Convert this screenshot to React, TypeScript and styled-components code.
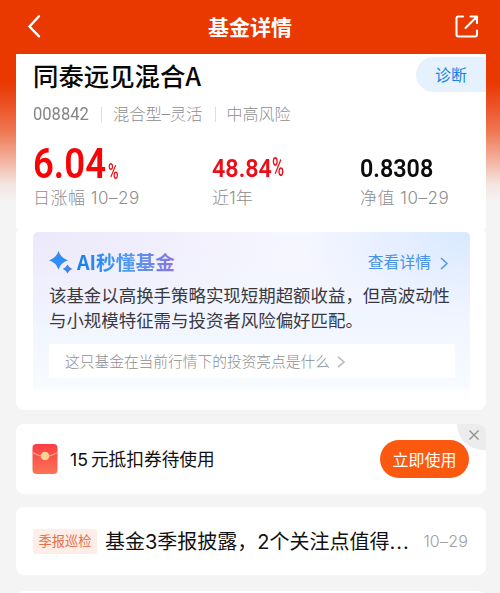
import React from 'react';
import styled, { createGlobalStyle } from 'styled-components';

const GlobalStyle = createGlobalStyle`
  * { box-sizing: border-box; }
  body {
    margin: 0;
    background: #f4f4f4;
    font-family: Inter, "Noto Sans CJK SC", sans-serif;
    -webkit-font-smoothing: antialiased;
  }
`;

const Page = styled.main`
  width: 500px;
  height: 593px;
  overflow: hidden;
  background: linear-gradient(180deg, #e93800 0, #e93800 82px, #ec5226 105px, #ee7550 130px, #f3ad98 158px, #f4e4df 184px, #f4f4f4 202px);
`;

const Header = styled.header`
  display: flex;
  align-items: center;
  justify-content: space-between;
  height: 54px;
  padding: 0 20px 0 26px;
  color: #fff;
`;

const HeaderTitle = styled.h1`
  margin: 0 0 2px 4px;
  font: 700 21px/52px "Noto Sans CJK SC", sans-serif;
`;

const Stack = styled.div`
  display: flex;
  flex-direction: column;
  padding: 0 14px 0 16px;
`;

const Card = styled.section`
  background: #fff;
  border-radius: 8px;
`;

const SummaryCard = styled(Card)`
  height: 176px;
  border-radius: 0 0 4px 4px;
  padding-left: 17px;
`;

const InsightCard = styled(Card)`
  height: 180px;
  padding: 2px 16px 0 17px;
  border-radius: 4px 4px 8px 8px;
`;

const Text = styled.span<{ $size: number; $line?: number; $color?: string; $weight?: number; $track?: number }>`
  font-size: ${p => p.$size}px;
  line-height: ${p => p.$line ?? 24}px;
  color: ${p => p.$color ?? '#8e8e8e'};
  font-weight: ${p => p.$weight ?? 300};
  letter-spacing: ${p => p.$track ?? 0}px;
  white-space: nowrap;
`;

const NameRow = styled.div`
  display: flex;
  align-items: flex-start;
  justify-content: space-between;
  height: 46px;
`;

const FundName = styled.h2`
  margin: 3px 0 0;
  font: 500 25.4px/36px "Noto Sans CJK SC", sans-serif;
  color: #080808;
`;

const Diagnose = styled.button`
  width: 70px;
  height: 35px;
  margin-top: 3px;
  padding: 0 0 1px;
  border: 0;
  border-radius: 18px 0 0 18px;
  background: #e5f2fd;
  color: #1582e9;
  font: 400 16px/34px "Noto Sans CJK SC", sans-serif;
`;

const MetaRow = styled.div`
  display: flex;
  align-items: center;
  height: 28px;
`;

const MetaText = styled(Text)`
  margin-top: -1px;
`;

const Divider = styled.i`
  width: 1px;
  height: 15px;
  margin: 0 11px 0 12px;
  background: #dedede;
`;

const Metrics = styled.div`
  display: grid;
  grid-template-columns: 179px 148px 1fr;
`;

const Metric = styled.div`
  display: flex;
  flex-direction: column;
`;

const Value = styled.div<{ $color: string }>`
  display: flex;
  align-items: flex-end;
  height: 58px;
  color: ${p => p.$color};
`;

/* Condensed numerals; the box keeps the narrowed width so neighbours sit close. */
const Digits = styled.span<{ $size: number; $width: number; $scale: number; $line: number; $weight?: number; $color?: string }>`
  display: block;
  width: ${p => p.$width}px;
  color: ${p => p.$color ?? 'inherit'};
  font: ${p => p.$weight ?? 600} ${p => p.$size}px/${p => p.$line}px Roboto, sans-serif;
  white-space: nowrap;
  transform: scaleX(${p => p.$scale});
  transform-origin: 0 50%;
`;

const InsightPanel = styled.div`
  height: 162px;
  padding: 15px 16px 0;
  border-radius: 5px 5px 0 0;
  background:
    linear-gradient(180deg, transparent 55%, #f7faff 94%, #fff 100%),
    radial-gradient(ellipse 170px 90px at 100% 0, #d8e9ff, transparent),
    radial-gradient(ellipse 260px 100px at 0 0, #ece8fa, transparent),
    linear-gradient(180deg, #f6f6ff, #f1f5ff 60%);
`;

const InsightHead = styled.div`
  display: flex;
  align-items: center;
  height: 30px;
`;

const InsightTitle = styled.h3`
  margin: 0 auto 0 4px;
  font: 700 19.7px/30px "Noto Sans CJK SC", sans-serif;
  color: transparent;
  background: linear-gradient(90deg, #147fee, #4b9bf5 50%, #8a77dc);
  background-clip: text;
`;

const InsightLink = styled.a`
  display: flex;
  align-items: center;
  gap: 9px;
  margin: 2px 6px 0 0;
`;

const Body = styled.p`
  margin: 6px 0 0;
  font-size: 17.45px;
  line-height: 25px;
  font-weight: 400;
  color: #38393f;
  white-space: nowrap;
`;

const Question = styled.div`
  display: flex;
  align-items: center;
  gap: 7px;
  width: 406px;
  height: 34px;
  margin-top: 11px;
  padding: 1px 0 0 16px;
  background: #fff;
`;

const CouponCard = styled(Card)`
  position: relative;
  display: flex;
  align-items: center;
  height: 70px;
  margin-top: 14px;
  padding: 0 17px 0 16px;
  overflow: hidden;
`;

const CouponLabel = styled.div`
  flex: 1;
  margin: 1px 0 0 12px;
  font-size: 17.7px;
  line-height: 28px;
  word-spacing: -2px;
  color: #111;
`;

const UseButton = styled.button`
  position: relative;
  z-index: 1;
  width: 89px;
  height: 38px;
  padding: 0;
  border: 0;
  border-radius: 19px;
  background: #fb5810;
  color: #fff;
  font: 400 16px/36px "Noto Sans CJK SC", sans-serif;
`;

const CloseCorner = styled.button`
  position: absolute;
  top: 0;
  right: 0;
  display: flex;
  align-items: center;
  justify-content: center;
  width: 29px;
  height: 26px;
  padding: 0 0 4px 4px;
  border: 0;
  border-radius: 0 8px 0 27px;
  background: #ececec;
`;

const ReportCard = styled(Card)`
  display: flex;
  align-items: center;
  height: 68px;
  margin-top: 13px;
  padding: 0 18px 0 17px;
`;

const Tag = styled.span`
  width: 64px;
  height: 25px;
  border-radius: 2px;
  background: #ffede8;
  color: #e66e4b;
  font-size: 13.3px;
  line-height: 24px;
  text-align: center;
`;

const ReportTitle = styled.div`
  flex: 1;
  margin: 2px 0 0 8px;
  font-size: 20px;
  line-height: 30px;
  color: #111;
  white-space: nowrap;
`;

const Ellipsis = styled.span`
  letter-spacing: 1px;
`;

const NextCard = styled(Card)`
  height: 20px;
  margin-top: 16px;
`;

const Chevron = ({ w, h, color, stroke }: { w: number; h: number; color: string; stroke: number }) => (
  <svg width={w} height={h} viewBox="0 0 8 13" preserveAspectRatio="none" fill="none" stroke={color} strokeWidth={stroke}>
    <path d="M1 1l6 5.5L1 12" />
  </svg>
);

export default function App() {
  return (
    <Page>
      <GlobalStyle />
      <Header>
        <svg width="16" height="26" viewBox="0 0 16 26" fill="none" stroke="#fff" strokeWidth="2.4" strokeLinecap="round">
          <path d="M13 2.200L3.500 12.500l9.500 9.800" />
        </svg>
        <HeaderTitle>基金详情</HeaderTitle>
        <svg width="26" height="26" viewBox="0 0 26 26" fill="none" stroke="#fff" strokeWidth="2.100" strokeLinecap="round" strokeLinejoin="round">
          <path d="M9 2.500H4.500Q2.500 2.500 2.500 4.500v16q0 2 2 2H21q2 0 2-2V16.500M16.500 2.500h6.500V9M22.500 3L11.500 14" />
        </svg>
      </Header>
      <Stack>
        <SummaryCard>
          <NameRow>
            <FundName>同泰远见混合A</FundName>
            <Diagnose>诊断</Diagnose>
          </NameRow>
          <MetaRow>
            <Digits $size={18} $width={56} $scale={0.92} $line={26} $weight={400} $color="#858585">008842</Digits>
            <Divider />
            <MetaText $size={16.3}>混合型–灵活</MetaText>
            <Divider />
            <MetaText $size={16}>中高风险</MetaText>
          </MetaRow>
          <Metrics>
            <Metric>
              <Value $color="#f50505">
                <Digits $size={42} $width={75} $scale={0.87} $line={44}>6.04</Digits>
                <Digits $size={22} $width={12} $scale={0.65} $line={28} $weight={500}>%</Digits>
              </Value>
              <Text $size={17} $track={0.5}>日涨幅 10–29</Text>
            </Metric>
            <Metric>
              <Value $color="#e90e18">
                <Digits $size={26.5} $width={60} $scale={0.88} $line={37}>48.84</Digits>
                <Digits $size={26} $width={13} $scale={0.63} $line={37} $weight={500}>%</Digits>
              </Value>
              <Text $size={17}>近1年</Text>
            </Metric>
            <Metric>
              <Value $color="#0c0c0c">
                <Digits $size={26.5} $width={73} $scale={0.88} $line={37}>0.8308</Digits>
              </Value>
              <Text $size={17} $track={0.5}>净值 10–29</Text>
            </Metric>
          </Metrics>
        </SummaryCard>
        <InsightCard>
          <InsightPanel>
            <InsightHead>
              <svg width="24" height="24" viewBox="0 0 24 24">
                <path fill="#2f8df3" d="M9.500 1Q11.800 8 19 10.200Q11.800 12.500 9.500 19.500Q7.200 12.500 0 10.200Q7.200 8 9.500 1Z" />
                <path fill="#4385e8" d="M18.500 14.500Q20 17.700 23.200 19Q20 20.300 18.500 23.500Q17 20.300 13.800 19Q17 17.700 18.500 14.500Z" />
              </svg>
              <InsightTitle>AI秒懂基金</InsightTitle>
              <InsightLink>
                <Text $size={15.8} $color="#4b91e6" $weight={400}>查看详情</Text>
                <Chevron w={8} h={13} color="#4b91e6" stroke={1.5} />
              </InsightLink>
            </InsightHead>
            <Body>该基金以高换手策略实现短期超额收益，但高波动性<br />与小规模特征需与投资者风险偏好匹配。</Body>
            <Question>
              <Text $size={14.72}>这只基金在当前行情下的投资亮点是什么</Text>
              <Chevron w={8} h={12} color="#bdbdbd" stroke={1.8} />
            </Question>
          </InsightPanel>
        </InsightCard>
        <CouponCard>
          <svg width="26" height="30" viewBox="0 0 26 30">
            <defs>
              <linearGradient id="envelope" x1="0" y1="0" x2="0" y2="1">
                <stop stopColor="#fb3d45" />
                <stop offset="1" stopColor="#fb7455" />
              </linearGradient>
            </defs>
            <rect x="0.500" width="25" height="30" rx="4" fill="url(#envelope)" />
            <path d="M.5 8.500Q13 16 25.500 8.500" fill="none" stroke="#ffa078" strokeWidth="1.200" />
            <circle cx="13" cy="12" r="4.300" fill="#ffd391" />
          </svg>
          <CouponLabel>15 元抵扣券待使用</CouponLabel>
          <UseButton>立即使用</UseButton>
          <CloseCorner aria-label="关闭">
            <svg width="10" height="10" viewBox="0 0 10 10" stroke="#8f8f8f" strokeWidth="1.300">
              <path d="M.5.5l9 9M9.500.5l-9 9" />
            </svg>
          </CloseCorner>
        </CouponCard>
        <ReportCard>
          <Tag>季报巡检</Tag>
          <ReportTitle>基金3季报披露，2个关注点值得<Ellipsis>...</Ellipsis></ReportTitle>
          <Text $size={16} $color="#a0a0a0" $track={0.2}>10–29</Text>
        </ReportCard>
        <NextCard />
      </Stack>
    </Page>
  );
}
